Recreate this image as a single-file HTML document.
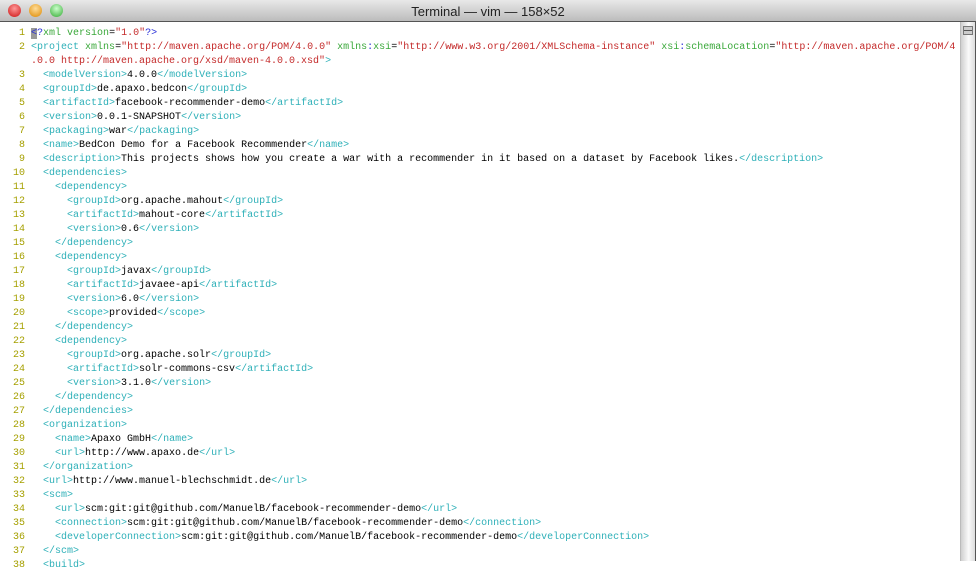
<!DOCTYPE html>
<html><head><meta charset="utf-8"><style>
html,body{margin:0;padding:0;width:976px;height:561px;overflow:hidden;background:#fff;}
.tb{position:absolute;left:0;top:0;width:976px;height:22px;background:linear-gradient(#e8e8e8,#bcbcbc);border-bottom:1px solid #555;box-sizing:border-box;}
.tt{position:absolute;left:0;width:976px;top:4px;text-align:center;font:13px "Liberation Sans",sans-serif;color:#222;}
.b{position:absolute;top:4px;width:13px;height:13px;border-radius:50%;}
pre{position:absolute;left:7px;top:27px;margin:0;font:10px/14px "Liberation Mono",monospace;color:#000;white-space:pre;}
.n{color:#a6a000}.t{color:#2eb0b8}.a{color:#3aa83a}.s{color:#c42a2a}.p{color:#2a30d8}
.sb{position:absolute;left:960px;top:22px;width:15px;height:539px;background:linear-gradient(90deg,#cfcfcf,#fafafa 50%,#d8d8d8);border-left:1px solid #bbb;}
.edge{position:absolute;left:975px;top:22px;width:1px;height:539px;background:#555;}
.cur{background:#999;color:#2a30d8}
</style></head><body>
<div class="tb"><div class="b" style="left:8px;background:radial-gradient(circle at 50% 35%,#f99,#c11)"></div><div class="b" style="left:29px;background:radial-gradient(circle at 50% 35%,#fd9,#d80)"></div><div class="b" style="left:50px;background:radial-gradient(circle at 50% 35%,#cfc,#3a3)"></div><div class="tt">Terminal — vim — 158×52</div></div>
<pre><span class="n">  1 </span><span class="cur">&lt;</span><span class="p">?</span><span class="a">xml version</span>=<span class="s">"1.0"</span><span class="p">?&gt;</span>
<span class="n">  2 </span><span class="t">&lt;project</span> <span class="a">xmlns</span>=<span class="s">"http://maven.apache.org/POM/4.0.0"</span> <span class="a">xmlns</span><span class="p">:</span><span class="a">xsi</span>=<span class="s">"http://www.w3.org/2001/XMLSchema-instance"</span> <span class="a">xsi</span><span class="p">:</span><span class="a">schemaLocation</span>=<span class="s">"http://maven.apache.org/POM/4</span>
<span class="s">    .0.0 http://maven.apache.org/xsd/maven-4.0.0.xsd"</span><span class="t">&gt;</span>
<span class="n">  3 </span>  <span class="t">&lt;modelVersion&gt;</span>4.0.0<span class="t">&lt;/modelVersion&gt;</span>
<span class="n">  4 </span>  <span class="t">&lt;groupId&gt;</span>de.apaxo.bedcon<span class="t">&lt;/groupId&gt;</span>
<span class="n">  5 </span>  <span class="t">&lt;artifactId&gt;</span>facebook-recommender-demo<span class="t">&lt;/artifactId&gt;</span>
<span class="n">  6 </span>  <span class="t">&lt;version&gt;</span>0.0.1-SNAPSHOT<span class="t">&lt;/version&gt;</span>
<span class="n">  7 </span>  <span class="t">&lt;packaging&gt;</span>war<span class="t">&lt;/packaging&gt;</span>
<span class="n">  8 </span>  <span class="t">&lt;name&gt;</span>BedCon Demo for a Facebook Recommender<span class="t">&lt;/name&gt;</span>
<span class="n">  9 </span>  <span class="t">&lt;description&gt;</span>This projects shows how you create a war with a recommender in it based on a dataset by Facebook likes.<span class="t">&lt;/description&gt;</span>
<span class="n"> 10 </span>  <span class="t">&lt;dependencies&gt;</span>
<span class="n"> 11 </span>    <span class="t">&lt;dependency&gt;</span>
<span class="n"> 12 </span>      <span class="t">&lt;groupId&gt;</span>org.apache.mahout<span class="t">&lt;/groupId&gt;</span>
<span class="n"> 13 </span>      <span class="t">&lt;artifactId&gt;</span>mahout-core<span class="t">&lt;/artifactId&gt;</span>
<span class="n"> 14 </span>      <span class="t">&lt;version&gt;</span>0.6<span class="t">&lt;/version&gt;</span>
<span class="n"> 15 </span>    <span class="t">&lt;/dependency&gt;</span>
<span class="n"> 16 </span>    <span class="t">&lt;dependency&gt;</span>
<span class="n"> 17 </span>      <span class="t">&lt;groupId&gt;</span>javax<span class="t">&lt;/groupId&gt;</span>
<span class="n"> 18 </span>      <span class="t">&lt;artifactId&gt;</span>javaee-api<span class="t">&lt;/artifactId&gt;</span>
<span class="n"> 19 </span>      <span class="t">&lt;version&gt;</span>6.0<span class="t">&lt;/version&gt;</span>
<span class="n"> 20 </span>      <span class="t">&lt;scope&gt;</span>provided<span class="t">&lt;/scope&gt;</span>
<span class="n"> 21 </span>    <span class="t">&lt;/dependency&gt;</span>
<span class="n"> 22 </span>    <span class="t">&lt;dependency&gt;</span>
<span class="n"> 23 </span>      <span class="t">&lt;groupId&gt;</span>org.apache.solr<span class="t">&lt;/groupId&gt;</span>
<span class="n"> 24 </span>      <span class="t">&lt;artifactId&gt;</span>solr-commons-csv<span class="t">&lt;/artifactId&gt;</span>
<span class="n"> 25 </span>      <span class="t">&lt;version&gt;</span>3.1.0<span class="t">&lt;/version&gt;</span>
<span class="n"> 26 </span>    <span class="t">&lt;/dependency&gt;</span>
<span class="n"> 27 </span>  <span class="t">&lt;/dependencies&gt;</span>
<span class="n"> 28 </span>  <span class="t">&lt;organization&gt;</span>
<span class="n"> 29 </span>    <span class="t">&lt;name&gt;</span>Apaxo GmbH<span class="t">&lt;/name&gt;</span>
<span class="n"> 30 </span>    <span class="t">&lt;url&gt;</span>http://www.apaxo.de<span class="t">&lt;/url&gt;</span>
<span class="n"> 31 </span>  <span class="t">&lt;/organization&gt;</span>
<span class="n"> 32 </span>  <span class="t">&lt;url&gt;</span>http://www.manuel-blechschmidt.de<span class="t">&lt;/url&gt;</span>
<span class="n"> 33 </span>  <span class="t">&lt;scm&gt;</span>
<span class="n"> 34 </span>    <span class="t">&lt;url&gt;</span>scm:git:git@github.com/ManuelB/facebook-recommender-demo<span class="t">&lt;/url&gt;</span>
<span class="n"> 35 </span>    <span class="t">&lt;connection&gt;</span>scm:git:git@github.com/ManuelB/facebook-recommender-demo<span class="t">&lt;/connection&gt;</span>
<span class="n"> 36 </span>    <span class="t">&lt;developerConnection&gt;</span>scm:git:git@github.com/ManuelB/facebook-recommender-demo<span class="t">&lt;/developerConnection&gt;</span>
<span class="n"> 37 </span>  <span class="t">&lt;/scm&gt;</span>
<span class="n"> 38 </span>  <span class="t">&lt;build&gt;</span></pre>
<div class="sb"><div style="position:absolute;left:2px;top:4px;width:10px;height:9px;border:1px solid #777;box-sizing:border-box;background:linear-gradient(#ccc 40%,#555 40%,#555 60%,#ccc 60%)"></div></div>
<div class="edge"></div>
</body></html>
